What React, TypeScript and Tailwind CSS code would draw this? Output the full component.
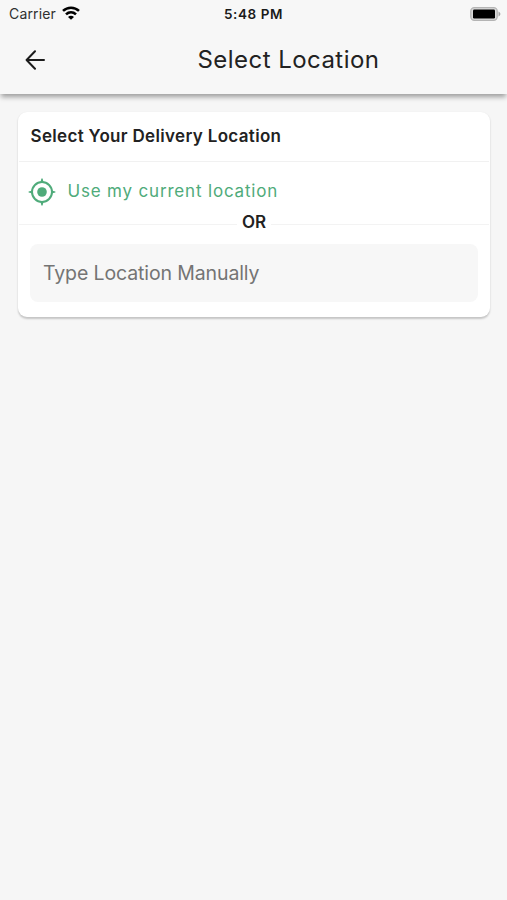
import type { ReactNode } from 'react'

export default function App() {
  return (
    <div className="h-[900px] w-[507px] overflow-hidden bg-[#f6f6f6] font-['Inter',sans-serif] text-[#222]">
      <header className="relative h-[94px] bg-[#f7f7f7] shadow-[0_4px_5px_-1px_rgba(0,0,0,0.36)]">
        <StatusBar />
        <div className="grid h-[64px] grid-cols-[70px_1fr] items-center">
          <button className="flex justify-center" aria-label="Back">
            <BackArrow />
          </button>
          <h1 className="pl-[127.5px] text-[24px] leading-8 tracking-[0.45px] whitespace-nowrap">
            Select Location
          </h1>
        </div>
      </header>

      <main className="pt-[18px] pr-[17px] pl-[18px]">
        <section className="h-[205px] rounded-[9px] bg-white shadow-[0_1.5px_2px_rgba(0,0,0,0.2)]">
          <h2 className="flex h-[49px] items-center pt-px pl-[12.5px] text-[17px] font-semibold tracking-[0.33px] whitespace-nowrap">
            Select Your Delivery Location
          </h2>
          <div className="mx-px h-px bg-[#f1f1f1]" />

          <button className="flex h-[50px] w-full items-center pt-[9px] pl-[10px] text-[#4fab7a]">
            <LocationIcon />
            <span className="mt-px ml-[11.5px] text-[17px] tracking-[0.82px] whitespace-nowrap">Use my current location</span>
          </button>

          <Divider>OR</Divider>

          <div className="px-3 pt-3">
            <input
              type="text"
              placeholder="Type Location Manually"
              className="h-[58px] w-full rounded-[8px] bg-[#f7f7f7] px-[13px] pb-px text-[19.5px] tracking-[-0.12px] outline-none placeholder:text-[#747474] placeholder:opacity-100"
            />
          </div>
        </section>
      </main>
    </div>
  )
}

function StatusBar() {
  return (
    <div className="grid h-7 grid-cols-3 items-center text-[14px] leading-4 whitespace-nowrap text-black">
      <div className="flex items-center gap-[6px] pl-[9px]">
        <span className="tracking-[0.15px] text-[#303030]">Carrier</span>
        <WifiIcon />
      </div>
      <span className="text-center text-[13.5px] font-semibold tracking-[0.6px] text-[#1a1a1a]">5:48 PM</span>
      <div className="flex justify-end pr-[6px] pb-px">
        <BatteryIcon />
      </div>
    </div>
  )
}

function Divider({ children }: { children: ReactNode }) {
  return (
    <div className="flex h-5 items-center px-px">
      <div className="mt-[5px] h-px flex-1 bg-[#f3f3f3]" />
      <span className="px-[5px] text-[17px] leading-5 font-semibold">{children}</span>
      <div className="mt-[5px] h-px flex-1 bg-[#f3f3f3]" />
    </div>
  )
}

function BackArrow() {
  return (
    <svg width="20" height="20" viewBox="0 0 20 20" fill="none" stroke="#1c1c1c" strokeWidth="2" strokeLinecap="round" strokeLinejoin="round">
      <path d="M10 1.3L1.6 10L10 18.7M1.8 10H19" />
    </svg>
  )
}

function LocationIcon() {
  return (
    <svg width="28" height="28" viewBox="0 0 28 28" fill="currentColor">
      <circle cx="14" cy="14" r="10" fill="none" stroke="currentColor" strokeWidth="2" />
      <circle cx="14" cy="14" r="4.8" />
      {/* tapered crosshair ticks */}
      <path d="M13.4 .6H14.6L15.6 4.5H12.4ZM13.4 27.4H14.6L15.6 23.5H12.4ZM.6 13.4V14.6L4.5 15.6V12.4ZM27.4 13.4V14.6L23.5 15.6V12.4Z" />
    </svg>
  )
}

function WifiIcon() {
  return (
    <svg width="18" height="14" viewBox="0 0 18 14" fill="none" stroke="#000" strokeWidth="2.6" className="-mt-0.5">
      <path d="M1 4.9C5.5 .7 12.5 .7 17 4.9" />
      <path d="M4 8.4C6.9 5.7 11.1 5.7 14 8.4" />
      <path d="M9 13.7L6 10.9C7.7 9.4 10.3 9.4 12 10.9Z" fill="#000" stroke="none" />
    </svg>
  )
}

function BatteryIcon() {
  return (
    <svg width="31" height="14" viewBox="0 0 31 14">
      <rect x="0.8" y="0.7" width="26.4" height="12.6" rx="3.5" fill="#dadada" stroke="#b4b4b4" strokeWidth="1.3" />
      <rect x="3" y="2.5" width="22" height="9" rx="1.2" fill="#000" />
      <path d="M28.5 4.5C31 5.8 31 8.2 28.5 9.5Z" fill="#a5a5a5" />
    </svg>
  )
}
